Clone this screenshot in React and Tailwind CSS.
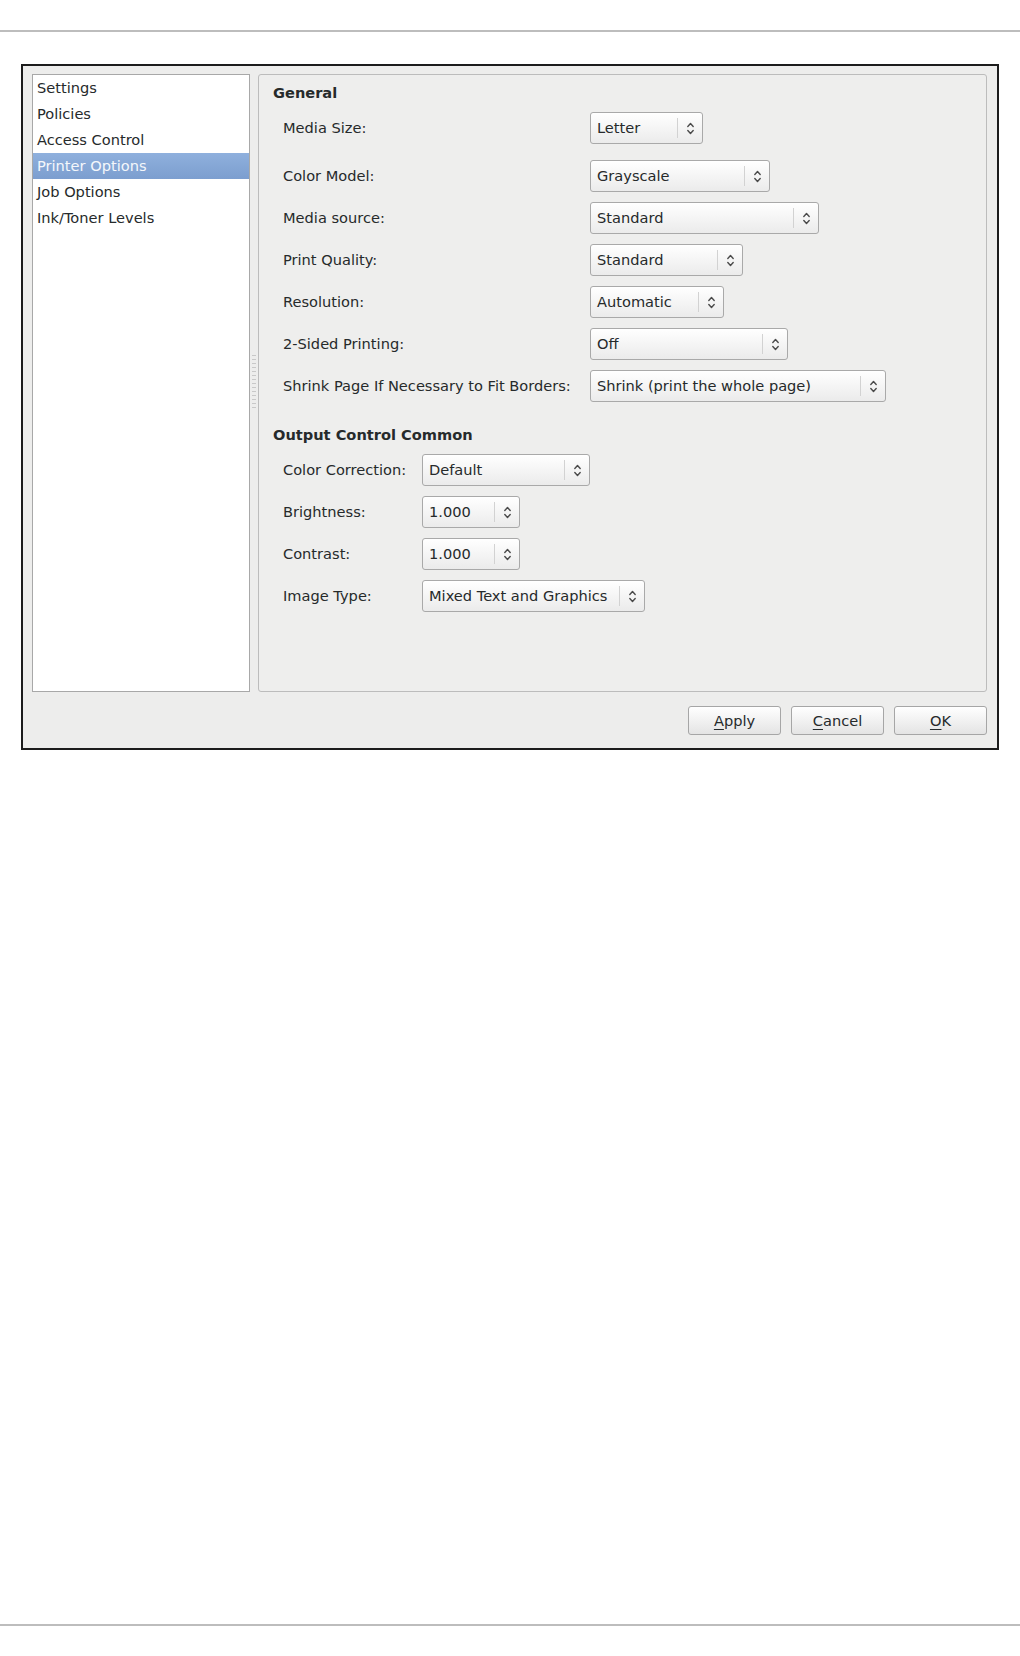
import React from "react";

const Arrows = () => (
  <svg width="9" height="15" viewBox="0 0 9 15" fill="none" stroke="#4a4a4a" strokeWidth="1.4" strokeLinecap="round" strokeLinejoin="round">
    <path d="M1.8 5.5 L4.5 2.6 L7.2 5.5" />
    <path d="M1.8 9.5 L4.5 12.4 L7.2 9.5" />
  </svg>
);

function Combo({ value, wClass }) {
  return (
    <div className={`flex h-[32px] items-center rounded-[3px] border border-[#a9a9a9] bg-gradient-to-b from-[#ffffff] to-[#ebebeb] shadow-[inset_0_1px_0_#ffffff] ${wClass}`}>
      <span className="flex-1 truncate pl-[6px]">{value}</span>
      <span className="h-[20px] w-px bg-[#d2d2d2]" />
      <span className="flex w-[24px] items-center justify-center">
        <Arrows />
      </span>
    </div>
  );
}

function Row({ label, value, wClass, labelW, extra = "" }) {
  return (
    <div className={`flex h-[32px] items-center ${extra}`}>
      <div className={`${labelW} shrink-0`}>{label}</div>
      <Combo value={value} wClass={wClass} />
    </div>
  );
}

function Btn({ u, rest }) {
  return (
    <button className="flex h-[29px] w-[93px] items-center justify-center rounded-[3px] border border-[#a6a6a6] bg-gradient-to-b from-[#ffffff] to-[#e4e4e4] text-[#262a2b]">
      <span>
        <span className="underline underline-offset-[3px]">{u}</span>
        {rest}
      </span>
    </button>
  );
}

export default function App() {
  const items = ["Settings", "Policies", "Access Control", "Printer Options", "Job Options", "Ink/Toner Levels"];
  return (
    <div className="min-h-[1656px] w-[1020px] bg-white font-['DejaVu_Sans','Liberation_Sans',sans-serif] text-[14.6px] text-[#262a2b]">
      <div className="h-[30px]" />
      <div className="h-[2px] w-full bg-[#bdbdbd]" />
      <div className="ml-[21px] mt-[32px] w-[978px] border-2 border-[#1c1c1c] bg-[#ededec] pb-[13px] pl-[9px] pr-[10px] pt-[8px]">
        <div className="flex h-[618px]">
          {/* sidebar */}
          <div className="w-[218px] shrink-0 border border-[#a8a8a8] bg-white">
            {items.map((it, i) => (
              <div
                key={it}
                className={
                  i === 3
                    ? "flex h-[26px] items-center bg-gradient-to-b from-[#8fb0dd] to-[#7c9ecf] pl-[4px] text-[#f4f7fb]"
                    : "flex h-[26px] items-center pl-[4px]"
                }
              >
                {it}
              </div>
            ))}
          </div>
          {/* paned handle */}
          <div className="flex w-[8px] shrink-0 items-center justify-center">
            <div className="h-[56px] w-[4px] bg-[repeating-linear-gradient(to_bottom,#c8c8c8_0px,#c8c8c8_1px,transparent_1px,transparent_4px)]" />
          </div>
          {/* panel */}
          <div className="flex-1 rounded-[3px] border border-[#bcbcbc] bg-[#eeeeed] pl-[14px] pt-[8px]">
            <div className="h-[20px] font-bold leading-[20px]">General</div>
            <div className="ml-[10px] mt-[9px] flex flex-col">
              <Row label="Media Size:" value="Letter" wClass="w-[113px]" labelW="w-[307px]" />
              <Row label="Color Model:" value="Grayscale" wClass="w-[180px]" labelW="w-[307px]" extra="mt-[16px]" />
              <Row label="Media source:" value="Standard" wClass="w-[229px]" labelW="w-[307px]" extra="mt-[10px]" />
              <Row label="Print Quality:" value="Standard" wClass="w-[153px]" labelW="w-[307px]" extra="mt-[10px]" />
              <Row label="Resolution:" value="Automatic" wClass="w-[134px]" labelW="w-[307px]" extra="mt-[10px]" />
              <Row label="2-Sided Printing:" value="Off" wClass="w-[198px]" labelW="w-[307px]" extra="mt-[10px]" />
              <Row label="Shrink Page If Necessary to Fit Borders:" value="Shrink (print the whole page)" wClass="w-[296px]" labelW="w-[307px]" extra="mt-[10px]" />
            </div>
            <div className="mt-[23px] h-[20px] font-bold leading-[20px]">Output Control Common</div>
            <div className="ml-[10px] mt-[9px] flex flex-col">
              <Row label="Color Correction:" value="Default" wClass="w-[168px]" labelW="w-[139px]" />
              <Row label="Brightness:" value="1.000" wClass="w-[98px]" labelW="w-[139px]" extra="mt-[10px]" />
              <Row label="Contrast:" value="1.000" wClass="w-[98px]" labelW="w-[139px]" extra="mt-[10px]" />
              <Row label="Image Type:" value="Mixed Text and Graphics" wClass="w-[223px]" labelW="w-[139px]" extra="mt-[10px]" />
            </div>
          </div>
        </div>
        <div className="mt-[14px] flex justify-end gap-[10px]">
          <Btn u="A" rest="pply" />
          <Btn u="C" rest="ancel" />
          <Btn u="O" rest="K" />
        </div>
      </div>
      <div className="h-[874px]" />
      <div className="h-[2px] w-full bg-[#bdbdbd]" />
    </div>
  );
}
